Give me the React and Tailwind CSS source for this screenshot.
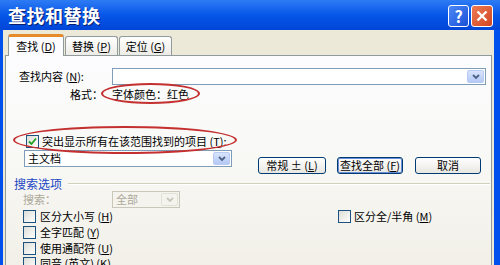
import React from "react";

const F = { fontFamily: '"Noto Sans CJK SC", "Liberation Sans", sans-serif' };

function U({ c }) {
  return <span className="underline">{c}</span>;
}

function CheckBox({ checked }) {
  return (
    <span className="inline-flex items-center justify-center w-[13px] h-[13px] border border-[#1C5180] bg-gradient-to-br from-[#DCDCD7] to-white shrink-0">
      {checked && (
        <svg width="9" height="9" viewBox="0 0 9 9">
          <path d="M1 4.5 L3.5 7 L8 1.5" stroke="#21A121" strokeWidth="1.8" fill="none" />
        </svg>
      )}
    </span>
  );
}

function Arrow({ disabled }) {
  return (
    <span
      className={
        "w-[17px] h-full flex items-center justify-center shrink-0 rounded-[2px] " +
        (disabled ? "bg-[#F4F3EE] border border-[#E3E1D6]" : "bg-gradient-to-b from-[#D9E4FC] to-[#B5C9F6] border border-[#B7CBF5]")
      }
    >
      <svg width="8" height="6" viewBox="0 0 8 6">
        <path d="M1 1 L4 4 L7 1" stroke={disabled ? "#C9C7BA" : "#4D6185"} strokeWidth="1.8" fill="none" />
      </svg>
    </span>
  );
}

function Btn({ children, focus, w }) {
  return (
    <div
      className={
        "h-[17px] rounded-[3px] border border-[#003C74] bg-gradient-to-b from-white to-[#E8E7E1] flex items-center justify-center text-[11px] leading-none text-black " +
        w +
        (focus ? " shadow-[inset_0_0_0_1px_#6C8ED6]" : "")
      }
    >
      {children}
    </div>
  );
}

export default function App() {
  return (
    <div className="w-[500px] h-[265px] overflow-hidden bg-[#0050EE] flex flex-col text-black" style={F}>
      {/* Title bar */}
      <div className="h-[30px] shrink-0 flex items-center justify-between bg-gradient-to-b from-[#2D7BF4] via-[#0656E8] to-[#0046D8] pl-[8px] pr-[7px]">
        <span className="text-white text-[18px] font-bold leading-none tracking-[0.5px] [text-shadow:1px_1px_0_#0A1E6E]">查找和替换</span>
        <div className="flex gap-[2px] items-center mt-[2px]">
          <div className="w-[21px] h-[22px] rounded-[3px] border border-white bg-gradient-to-br from-[#4C88F6] to-[#1B4FD8] flex items-center justify-center text-white text-[16px] font-bold leading-none">?</div>
          <div className="w-[22px] h-[22px] rounded-[3px] border border-white bg-gradient-to-br from-[#EC7A53] to-[#D24420] flex items-center justify-center">
            <svg width="12" height="12" viewBox="0 0 12 12">
              <path d="M1.5 1.5 L10.5 10.5 M10.5 1.5 L1.5 10.5" stroke="white" strokeWidth="2.4" />
            </svg>
          </div>
        </div>
      </div>

      {/* Body */}
      <div className="flex-1 ml-[3px] mr-[6px] bg-[#ECE9D8] flex flex-col">
        {/* Tabs */}
        <div className="flex items-end pl-[5px] pt-[3px] h-[25px] shrink-0 relative z-10 text-[11px]">
          <div className="h-[22px] w-[56px] bg-[#FCFCFE] border border-[#919B9C] border-b-0 border-t-[3px] border-t-[#E68B2C] rounded-t-[3px] flex items-center justify-center leading-none mb-[-1px] pb-[1px]">
            查找 (<U c="D" />)
          </div>
          <div className="h-[19px] w-[53px] ml-[1px] bg-gradient-to-b from-white to-[#ECEBE5] border border-[#919B9C] border-b-0 rounded-t-[3px] flex items-center justify-center leading-none">
            替换 (<U c="P" />)
          </div>
          <div className="h-[19px] w-[53px] ml-[1px] bg-gradient-to-b from-white to-[#ECEBE5] border border-[#919B9C] border-b-0 rounded-t-[3px] flex items-center justify-center leading-none">
            定位 (<U c="G" />)
          </div>
        </div>

        {/* Panel */}
        <div className="relative ml-[2px] mr-[2px] flex-1 border border-[#919B9C] border-b-0 bg-gradient-to-b from-[#FCFCFE] via-[#F8F8F5] to-[#F1EFE7] flex flex-col text-[11px] leading-none">
          {/* Row 1 */}
          <div className="flex items-center h-[17px] mt-[12px] pl-[13px] pr-[5px]">
            <span className="w-[93px]">查找内容 (<U c="N" />):</span>
            <div className="flex-1 h-[17px] border border-[#7F9DB9] bg-white flex justify-end p-[1px]">
              <Arrow />
            </div>
          </div>
          {/* Row 2 */}
          <div className="flex items-center h-[18px] pl-[64px]">
            <span className="w-[42px]">格式：</span>
            <span>字体颜色：红色</span>
          </div>
          {/* Row 3 */}
          <div className="flex items-center h-[17px] mt-[30px] pl-[20px] gap-[3px]">
            <CheckBox checked />
            <span>突出显示所有在该范围找到的项目 (<U c="T" />):</span>
          </div>
          {/* Row 4 */}
          <div className="flex items-start h-[24px] pl-[18px]">
            <div className="w-[208px] h-[17px] border border-[#7F9DB9] bg-white flex items-center justify-between p-[1px] pl-[3px]">
              <span>主文档</span>
              <Arrow />
            </div>
            <div className="flex mt-[7px] ml-[26px] gap-[11px]">
              <Btn w="w-[68px]">常规 ± (<U c="L" />)</Btn>
              <Btn w="w-[66px]" focus>查找全部 (<U c="F" />)</Btn>
              <Btn w="w-[66px] ml-[1px]">取消</Btn>
            </div>
          </div>
          {/* Row 5 */}
          <div className="flex items-center h-[14px] pl-[8px] pr-[1px] mt-[3px]">
            <span className="text-[#2146C2] text-[12px]">搜索选项</span>
            <div className="flex-1 ml-[6px] h-[2px] border-t border-[#D0D0BF] border-b border-b-white" />
          </div>
          {/* Row 6 */}
          <div className="flex items-center h-[17px] pl-[17px]">
            <span className="w-[89px] text-[#ACA899]">搜索：</span>
            <div className="w-[68px] h-[17px] border border-[#C9C7BA] bg-[#F4F3EE] flex items-center justify-between p-[1px] pl-[3px] text-[#ACA899]">
              <span>全部</span>
              <Arrow disabled />
            </div>
          </div>
          {/* Checkbox rows */}
          <div className="flex items-center h-[16px] pl-[17px]">
            <div className="w-[315px] flex items-center gap-[4px]">
              <CheckBox />
              <span>区分大小写 (<U c="H" />)</span>
            </div>
            <div className="flex items-center gap-[3px]">
              <CheckBox />
              <span>区分全/半角 (<U c="M" />)</span>
            </div>
          </div>
          <div className="flex items-center h-[16px] pl-[17px] gap-[4px]">
            <CheckBox />
            <span>全字匹配 (<U c="Y" />)</span>
          </div>
          <div className="flex items-center h-[16px] pl-[17px] gap-[4px]">
            <CheckBox />
            <span>使用通配符 (<U c="U" />)</span>
          </div>
          <div className="flex items-center h-[15px] pl-[17px] gap-[4px]">
            <CheckBox />
            <span>同音 (英文) (<U c="K" />)</span>
          </div>

          {/* Red annotation ellipses */}
          <div className="absolute left-[95px] top-[27px] w-[99px] h-[21px] rounded-[50%] border-2 border-[#C3302F] pointer-events-none" />
          <div className="absolute left-[7px] top-[70px] w-[224px] h-[28px] rounded-[50%] border-2 border-[#C3302F] pointer-events-none" />
        </div>
      </div>
    </div>
  );
}
